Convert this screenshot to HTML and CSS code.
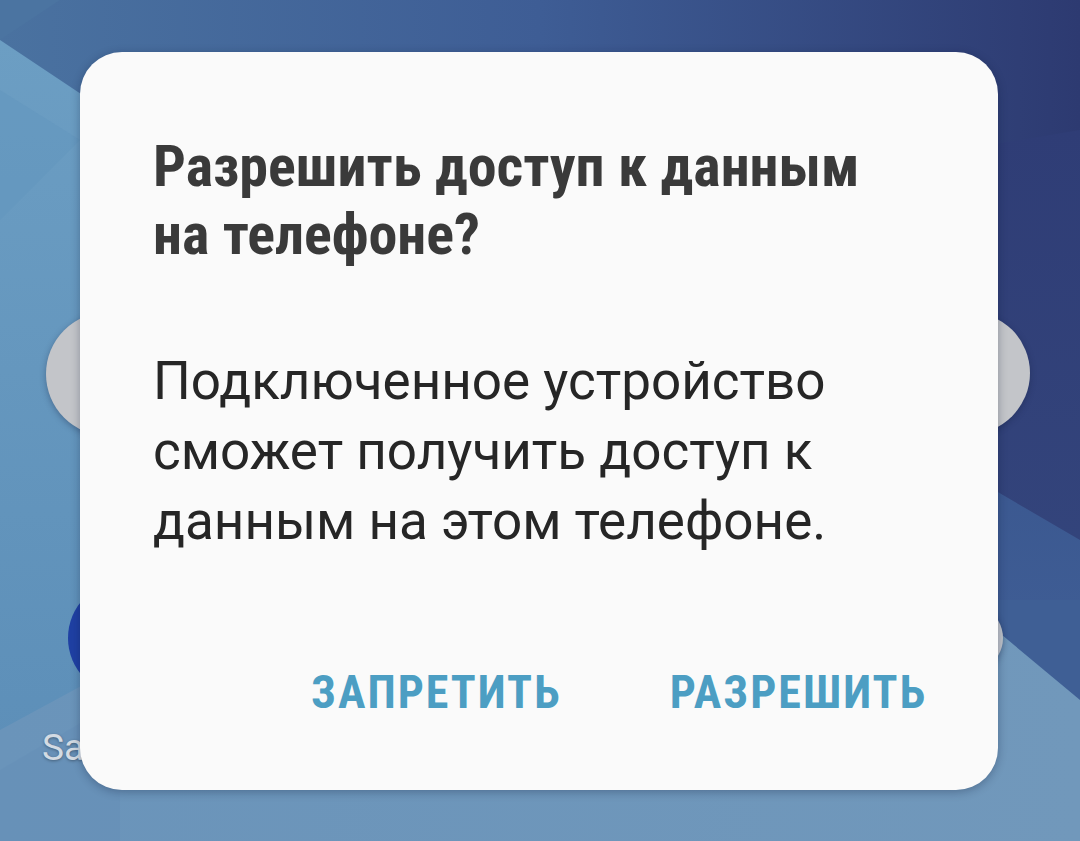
FILE: index.html
```html
<!DOCTYPE html>
<html lang="ru">
<head>
<meta charset="utf-8">
<title>Разрешить доступ</title>
<link rel="stylesheet" href="styles.css">
</head>
<body>
<div class="screen">
  <svg class="wallpaper" width="1080" height="841" viewBox="0 0 1080 841" aria-hidden="true">
    <defs>
      <linearGradient id="gTop" x1="0" y1="0" x2="1" y2="0">
        <stop offset="0" stop-color="#4a72a0"/>
        <stop offset="0.5" stop-color="#3e5d95"/>
        <stop offset="1" stop-color="#2d3a71"/>
      </linearGradient>
      <linearGradient id="gLeft" x1="0" y1="0" x2="0" y2="1">
        <stop offset="0" stop-color="#6c9ec3"/>
        <stop offset="1" stop-color="#5b8db7"/>
      </linearGradient>
      <linearGradient id="gRight" x1="0" y1="0" x2="0" y2="1">
        <stop offset="0" stop-color="#2f3d76"/>
        <stop offset="1" stop-color="#36497f"/>
      </linearGradient>
      <linearGradient id="gRight2" x1="0" y1="0" x2="0" y2="1">
        <stop offset="0" stop-color="#3b5890"/>
        <stop offset="1" stop-color="#43639a"/>
      </linearGradient>
      <linearGradient id="gBottom" x1="0" y1="0" x2="1" y2="0">
        <stop offset="0" stop-color="#6a94ba"/>
        <stop offset="1" stop-color="#7198bb"/>
      </linearGradient>
    </defs>
    <rect width="1080" height="841" fill="url(#gTop)"/>
    <polygon points="0,40 240,200 240,841 0,841" fill="url(#gLeft)"/>
    <polygon points="0,0 60,0 0,40" fill="#4b74a1"/>
    <polygon points="0,90 80,140 0,220" fill="#6296be" opacity="0.5"/>
    <polygon points="960,150 1080,130 1080,841 960,841" fill="url(#gRight)"/>
    <polygon points="960,470 1080,540 1080,841 960,841" fill="url(#gRight2)"/>
    <polygon points="0,730 240,600 1080,600 1080,841 0,841" fill="url(#gBottom)"/>
    <polygon points="960,600 1080,600 1080,700" fill="#3f5f95"/>
    <polygon points="0,770 120,700 120,841 0,841" fill="#6790b8" opacity="0.7"/>
  </svg>

  <div class="app-icon icon-gray icon-left"></div>
  <div class="app-icon icon-gray icon-right"></div>
  <div class="app-icon icon-blue icon-left-low"></div>
  <div class="app-icon icon-gray icon-right-low"></div>
  <span class="app-label">Samsung</span>

  <div class="dialog" role="dialog">
    <h1 class="dialog-title">Разрешить доступ к данным на&nbsp;телефоне?</h1>
    <p class="dialog-text">Подключенное устройство сможет получить доступ к данным на этом телефоне.</p>
    <div class="dialog-actions">
      <button class="dialog-btn">ЗАПРЕТИТЬ</button>
      <button class="dialog-btn">РАЗРЕШИТЬ</button>
    </div>
  </div>
</div>
</body>
</html>
```

FILE: styles.css
```css
* { box-sizing: border-box; }

html, body {
  margin: 0;
  padding: 0;
}

body {
  width: 1080px;
  height: 841px;
  overflow: hidden;
  font-family: Roboto, "Noto Sans", "DejaVu Sans", sans-serif;
}

.screen {
  position: relative;
  width: 1080px;
  height: 841px;
  padding: 52px 0 0 80px;
  overflow: hidden;
}

.wallpaper {
  position: absolute;
  left: 0;
  top: 0;
  display: block;
}

.app-icon {
  position: absolute;
  border-radius: 50%;
}

.icon-gray {
  background: #c3c5c9;
  box-shadow: 0 2px 6px rgba(20, 30, 60, 0.35);
}

.icon-blue {
  background: #1f40a3;
}

.icon-left {
  left: 46px;
  top: 312px;
  width: 124px;
  height: 124px;
}

.icon-right {
  left: 908px;
  top: 312px;
  width: 122px;
  height: 122px;
}

.icon-left-low {
  left: 68px;
  top: 580px;
  width: 118px;
  height: 116px;
}

.icon-right-low {
  left: 877px;
  top: 592px;
  width: 126px;
  height: 92px;
  background: #bfc3ca;
}

.app-label {
  position: absolute;
  left: 42px;
  top: 726px;
  font-family: Roboto, sans-serif;
  font-size: 37px;
  color: #d3dbe3;
  text-shadow: 0 1px 3px rgba(0, 0, 0, 0.35);
}

.dialog {
  position: relative;
  width: 918px;
  height: 738px;
  background: #fafafa;
  border-radius: 42px;
  box-shadow: 0 2px 10px rgba(10, 20, 50, 0.3);
  padding: 80px 73px 0 73px;
  display: flex;
  flex-direction: column;
}

.dialog-title {
  margin: 0;
  font-family: Roboto, "Liberation Sans Narrow", sans-serif;
  font-stretch: 75%;
  font-weight: 700;
  font-size: 58px;
  line-height: 68px;
  color: #3a3a3a;
  max-width: 760px;
}

.dialog-text {
  margin: 78px 0 0 0;
  font-family: Roboto, sans-serif;
  font-weight: 400;
  font-size: 53px;
  line-height: 70px;
  color: #262626;
  max-width: 720px;
}

.dialog-actions {
  margin-top: 110px;
  margin-right: -2px;
  display: flex;
  justify-content: flex-end;
  gap: 108px;
}

.dialog-btn {
  border: 0;
  background: none;
  padding: 0;
  font-family: Roboto, "Liberation Sans Narrow", sans-serif;
  font-stretch: 75%;
  font-weight: 700;
  font-size: 46px;
  letter-spacing: 2px;
  line-height: 52px;
  color: #4c9ec3;
  cursor: pointer;
}
```
